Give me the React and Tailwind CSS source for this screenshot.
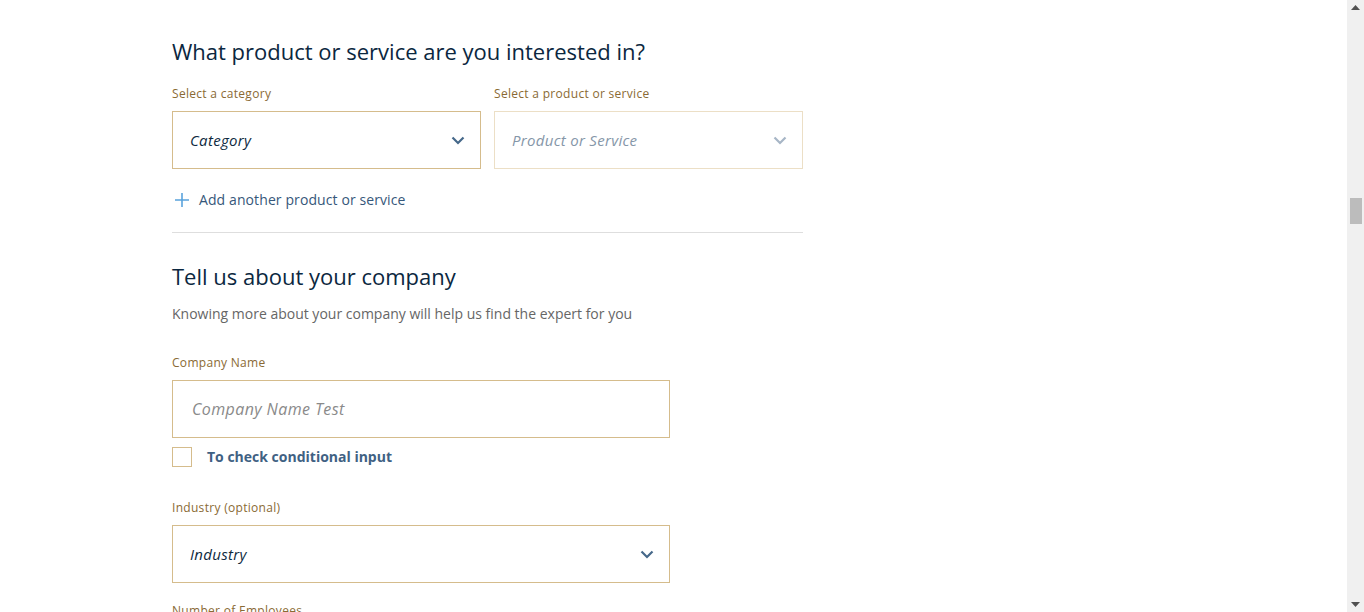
import React from "react";

const Chevron = ({ className }) => (
	<svg width="14" height="9" viewBox="0 0 14 9" className={className}>
		<path d="M1.5 1.5 L7 7 L12.5 1.5" fill="none" stroke="currentColor" strokeWidth="2.2" />
	</svg>
);

const Label = ({ children }) => (
	<div className="text-[12px] leading-[16px] tracking-[0.3px] text-[#8a6a34] mb-[9px]">
		{children}
	</div>
);

const SelectBox = ({ text, muted }) => (
	<div
		className={`h-[58px] flex items-center justify-between pl-[17px] pr-[15px] border ${muted ? "border-[#ecdfc6]" : "border-[#d5bc8c]"}`}>
		<span
			className={`italic text-[15px] tracking-[0.3px] ${muted ? "text-[#8596a8]" : "text-[#0e2a40]"}`}>
			{text}
		</span>
		<Chevron className={muted ? "text-[#a7b6c6]" : "text-[#46688a]"} />
	</div>
);

export default function App() {
	return (
		<div
			className="flex h-[612px] w-full overflow-hidden bg-white"
			style={{ fontFamily: '"Open Sans", "Noto Sans", sans-serif' }}>
			<main className="flex-1 pl-[172px] pt-[36px]">
				<div className="w-[631px]">
					<h2 className="text-[22px] leading-[30px] text-[#0b2740]">
						What product or service are you interested in?
					</h2>
					<div className="mt-[20px] grid grid-cols-2 gap-[13px]">
						<div>
							<Label>Select a category</Label>
							<SelectBox text="Category" />
						</div>
						<div>
							<Label>Select a product or service</Label>
							<SelectBox text="Product or Service" muted />
						</div>
					</div>
					<button className="mt-[20px] flex items-center gap-[10px] text-[14px] tracking-[0.1px] text-[#36577a]">
						<svg width="14" height="14" viewBox="0 0 14 14" className="text-[#5aa3dc] ml-[3px]">
							<path d="M7 0 V14 M0 7 H14" stroke="currentColor" strokeWidth="1.6" />
						</svg>
						Add another product or service
					</button>
					<div className="mt-[22px] border-t border-[#dedede]" />

					<h2 className="mt-[28px] text-[22px] leading-[30px] text-[#0b2740]">
						Tell us about your company
					</h2>
					<p className="mt-[13px] text-[14px] leading-[20px] text-[#666666]">
						Knowing more about your company will help us find the expert for you
					</p>

					<div className="mt-[31px] w-[498px]">
						<Label>Company Name</Label>
						<div className="h-[58px] flex items-center px-[19px] border border-[#d5bc8c]">
							<span className="italic text-[16px] tracking-[0.4px] text-[#8a8a8a]">
								Company Name Test
							</span>
						</div>
						<label className="mt-[8px] flex items-center gap-[15px]">
							<span className="w-[20px] h-[20px] border border-[#d5bc8c]" />
							<span className="text-[14px] font-bold text-[#3f6183]">
								To check conditional input
							</span>
						</label>

						<div className="mt-[33px]">
							<Label>Industry (optional)</Label>
							<SelectBox text="Industry" />
						</div>
						<div className="mt-[20px]">
							<Label>Number of Employees</Label>
						</div>
					</div>
				</div>
			</main>
			<aside className="w-[17px] shrink-0 bg-[#f0f0f0] flex flex-col items-center py-[5px]">
				<svg width="9" height="5" viewBox="0 0 9 5">
					<path d="M4.5 0 L9 5 H0 Z" fill="#505050" />
				</svg>
				<div className="mt-[188px] w-[12px] h-[26px] bg-[#bcbcbc]" />
				<svg width="9" height="5" viewBox="0 0 9 5" className="mt-auto">
					<path d="M0 0 H9 L4.5 5 Z" fill="#505050" />
				</svg>
			</aside>
		</div>
	);
}
